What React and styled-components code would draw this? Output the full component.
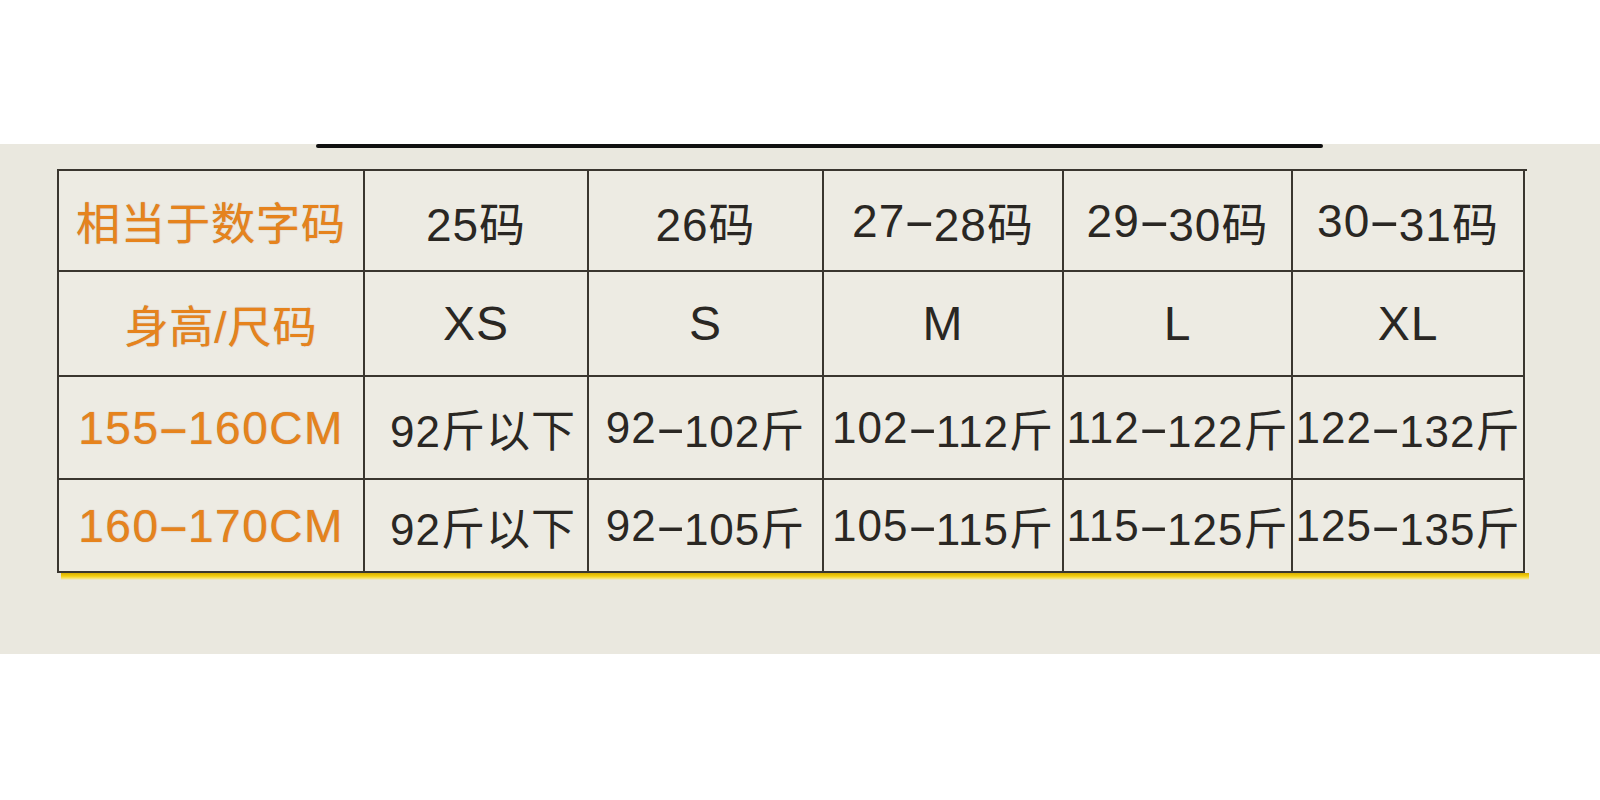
import React from "react";
import styled, { createGlobalStyle } from "styled-components";

const GlobalStyle = createGlobalStyle`
  html, body {
    margin: 0;
    padding: 0;
    background: #ffffff;
  }
  body {
    font-family: "Liberation Sans", "Noto Sans CJK SC", sans-serif;
  }
`;

const Page = styled.div`
  width: 1600px;
  height: 800px;
  background: #ffffff;
  padding-top: 144px;
  box-sizing: border-box;
`;

const Panel = styled.div`
  height: 510px;
  background: #eae8df;
  display: flex;
  flex-direction: column;
`;

const TopRule = styled.div`
  width: 1007px;
  height: 4px;
  margin-left: 316px;
  background: #101010;
  border-radius: 2px;
`;

const TableWrap = styled.div`
  margin-top: 21px;
  margin-left: 57px;
  width: 1470px;
`;

const Grid = styled.div`
  display: grid;
  grid-template-columns: 306px 224px 235px 240px 229px 232px;
  grid-template-rows: 101px 105px 103px 93px;
  border-left: 2px solid #3a362f;
  border-top: 2px solid #3a362f;
  background: #edebe3;
`;

const Cell = styled.div`
  display: flex;
  align-items: center;
  justify-content: center;
  border-right: 2px solid #3a362f;
  border-bottom: 2px solid #3a362f;
  white-space: nowrap;
  overflow: visible;
  font-size: ${(p) => p.size || 46}px;
  letter-spacing: ${(p) => p.spacing || 0}px;
  color: ${(p) => (p.label ? "#e6831d" : "#2a2723")};
  text-shadow: ${(p) => (p.label ? "0 0 1px rgba(120, 60, 0, 0.5)" : "none")};
  padding-left: ${(p) => p.shift || 0}px;
`;

const Dash = styled.span`
  display: inline-block;
  width: 0.62em;
  text-align: center;
  transform: scaleX(2.1);
  letter-spacing: 0;
`;

const YellowEdge = styled.div`
  margin-left: 4px;
  width: 1468px;
  height: 7px;
  background: linear-gradient(#d9ae00, #f4cf10 45%, #f8e26a 75%, rgba(248, 226, 106, 0));
`;

const withDash = (text) => {
  const parts = text.split("-");
  return parts.map((part, i) => (
    <React.Fragment key={i}>
      {part}
      {i < parts.length - 1 && <Dash>-</Dash>}
    </React.Fragment>
  ));
};

const codes = ["25码", "26码", "27-28码", "29-30码", "30-31码"];
const sizes = ["XS", "S", "M", "L", "XL"];
const rows = [
  {
    height: "155-160CM",
    weights: ["92斤以下", "92-102斤", "102-112斤", "112-122斤", "122-132斤"],
  },
  {
    height: "160-170CM",
    weights: ["92斤以下", "92-105斤", "105-115斤", "115-125斤", "125-135斤"],
  },
];

export default function App() {
  return (
    <>
      <GlobalStyle />
      <Page>
        <Panel>
          <TopRule />
          <TableWrap>
            <Grid>
              <Cell label size={44} spacing={1}>
                相当于数字码
              </Cell>
              {codes.map((c) => (
                <Cell key={c} size={46} spacing={1}>
                  {withDash(c)}
                </Cell>
              ))}

              <Cell label size={44} spacing={1} shift={20}>
                身高/尺码
              </Cell>
              {sizes.map((s) => (
                <Cell key={s} size={48} spacing={1}>
                  {s}
                </Cell>
              ))}

              {rows.map((row) => (
                <React.Fragment key={row.height}>
                  <Cell label size={46} spacing={1.5}>
                    {withDash(row.height)}
                  </Cell>
                  {row.weights.map((w, i) => (
                    <Cell key={i} size={44} spacing={1} shift={i === 0 ? 14 : 0}>
                      {withDash(w)}
                    </Cell>
                  ))}
                </React.Fragment>
              ))}
            </Grid>
            <YellowEdge />
          </TableWrap>
        </Panel>
      </Page>
    </>
  );
}
